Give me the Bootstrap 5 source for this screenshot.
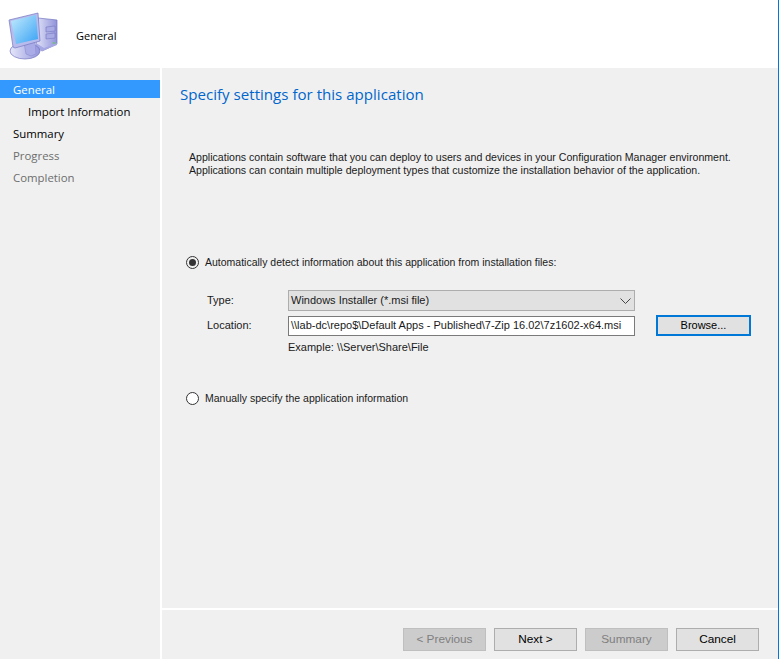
<!DOCTYPE html>
<html lang="en">
<head>
    <meta charset="UTF-8">
    <meta name="viewport" content="width=device-width, initial-scale=1.0">
    <title>General</title>
    <link href="https://cdn.jsdelivr.net/npm/bootstrap@5.3.0/dist/css/bootstrap.min.css" rel="stylesheet">
    <style>
        html, body {
            height: 100%;
            overflow: hidden;
        }
        body {
            background-color: #f0f0f0;
            font-family: "Liberation Sans", Arial, sans-serif;
            font-size: 11px;
            color: #1a1a1a;
        }
        .wizard {
            height: 659px;
            border-right: 1px solid #0078d7;
        }
        .wizard-head {
            height: 68px;
            background-color: #fff;
            font-family: "Open Sans", sans-serif;
            font-size: 11px;
            color: #000;
        }
        .wizard-head svg {
            width: 62px;
            height: 62px;
            flex: none;
        }
        .head-label {
            margin: 28px 0 0 14px;
        }
        .side-nav {
            width: 160px;
            padding-top: 12px;
            font-family: "Open Sans", sans-serif;
            font-size: 11.4px;
        }
        .side-item {
            height: 22px;
            line-height: 24px;
            padding-left: 13px;
            color: #000;
        }
        .side-item.current {
            height: 18px;
            line-height: 20px;
            margin-bottom: 2px;
            background-color: #3399ff;
            color: #fff;
        }
        .side-item.sub {
            padding-left: 28px;
        }
        .side-item.off {
            color: #6d6d6d;
        }
        .wizard-main {
            border-left: 2px solid #fff;
        }
        .wizard-body {
            padding: 15px 0 0 18px;
        }
        .wizard-title {
            font-family: "Open Sans", sans-serif;
            font-size: 15.1px;
            line-height: 22px;
            font-weight: 400;
            color: #0066cc;
            margin: 0 0 46px;
        }
        .intro {
            margin: 0 0 0 9px;
            font-size: 10.6px;
            line-height: 13px;
        }
        .radio-row {
            margin-left: 6px;
            font-size: 10.5px;
            line-height: 14px;
        }
        .radio-mark {
            width: 13px;
            height: 13px;
            border: 1px solid #333;
            border-radius: 50%;
            background-color: #fff;
            margin-right: 6px;
            flex: none;
        }
        .radio-mark.on {
            background-color: #f0f0f0;
        }
        .radio-mark.on::after {
            content: "";
            width: 7px;
            height: 7px;
            border-radius: 50%;
            background-color: #333;
        }
        .first-radio {
            margin-top: 78px;
        }
        .form-area {
            margin: 21px 0 0 27px;
        }
        .form-label-w {
            width: 81px;
        }
        .win-select {
            width: 347px;
            height: 21px;
            background-color: #e1e1e1;
            border: 1px solid #adadad;
            padding: 0 2px 0 2px;
        }
        .win-select svg {
            margin-right: 1px;
        }
        .win-input {
            width: 347px;
            height: 20px;
            background-color: #fff;
            border: 1px solid #7a7a7a;
            padding: 0 2px;
            white-space: nowrap;
            overflow: hidden;
        }
        .win-btn {
            width: 83px;
            height: 23px;
            padding: 0;
            font-size: 11.8px;
            line-height: 1;
            background-color: #e1e1e1;
            border: 1px solid #adadad;
            border-radius: 0;
            color: #000;
        }
        .win-btn:disabled {
            background-color: #cccccc;
            border-color: #bfbfbf;
            color: #7f7f7f;
            opacity: 1;
        }
        .browse-btn {
            width: 95px;
            height: 21px;
            margin-left: 21px;
            font-size: 11px;
            border: 2px solid #0078d7;
        }
        .example-line {
            margin: 5px 0 0 81px;
            line-height: 13px;
        }
        .second-radio {
            margin-top: 37px;
        }
        .wizard-foot {
            height: 51px;
            border-top: 2px solid #fff;
            padding: 18px 19px 0 0;
            gap: 8px;
        }
    </style>
</head>
<body>
    <div class="wizard d-flex flex-column">
        <div class="wizard-head d-flex align-items-start">
            <svg viewBox="0 0 62 62" aria-hidden="true">
                <defs>
                    <linearGradient id="screenFill" x1="0" y1="0" x2="1" y2="1">
                        <stop offset="0" stop-color="#c4ecfd"/>
                        <stop offset="1" stop-color="#38a2f4"/>
                    </linearGradient>
                    <linearGradient id="caseFill" x1="0" y1="0" x2="1" y2="0">
                        <stop offset="0" stop-color="#e2e3f8"/>
                        <stop offset="1" stop-color="#8f92da"/>
                    </linearGradient>
                    <linearGradient id="baseFill" x1="0" y1="0" x2="1" y2="0">
                        <stop offset="0" stop-color="#e6e7fa"/>
                        <stop offset="1" stop-color="#9496dc"/>
                    </linearGradient>
                </defs>
                <!-- case -->
                <path d="M38 18l19 2v24l-15 7-6-4z" fill="url(#caseFill)" stroke="#7477c0" stroke-width=".7"/>
                <path d="M46 27l9-1v5l-9 1zM46 34l9-1v5l-9 1z" fill="#a9ace4" stroke="#7477c0" stroke-width=".6"/>
                <path d="M36 43l8 5 13-5v2l-15 6-6-4z" fill="#a5a8e2"/>
                <circle cx="54" cy="43" r="1" fill="#66cc55"/>
                <!-- stand -->
                <ellipse cx="25" cy="51" rx="15" ry="8" fill="url(#baseFill)" stroke="#7477c0" stroke-width=".7"/>
                <path d="M24 43l11-2 1 13-5 2-5-2z" fill="#a9ace6" stroke="#8487cc" stroke-width=".5"/>
                <!-- monitor -->
                <path d="M9 20l29-7 2 28-25 7-2-1z" fill="#b9bbec" stroke="#7477c0" stroke-width=".7"/>
                <path d="M11 21l25-6 2 24-22 5z" fill="url(#screenFill)"/>
            </svg>
            <span class="head-label">General</span>
        </div>
        <div class="d-flex flex-grow-1" style="min-height:0">
            <nav class="side-nav flex-shrink-0">
                <div class="side-item current">General</div>
                <div class="side-item sub">Import Information</div>
                <div class="side-item">Summary</div>
                <div class="side-item off">Progress</div>
                <div class="side-item off">Completion</div>
            </nav>
            <div class="wizard-main flex-grow-1 d-flex flex-column">
                <div class="wizard-body flex-grow-1">
                    <h1 class="wizard-title">Specify settings for this application</h1>
                    <p class="intro">Applications contain software that you can deploy to users and devices in your Configuration Manager environment.<br>Applications can contain multiple deployment types that customize the installation behavior of the application.</p>

                    <div class="radio-row first-radio d-flex align-items-center">
                        <span class="radio-mark on d-flex align-items-center justify-content-center"></span>
                        <span>Automatically detect information about this application from installation files:</span>
                    </div>

                    <div class="form-area">
                        <div class="d-flex align-items-center mb-1">
                            <span class="form-label-w">Type:</span>
                            <div class="win-select d-flex align-items-center justify-content-between">
                                <span>Windows Installer (*.msi file)</span>
                                <svg width="11" height="6" viewBox="0 0 11 6" aria-hidden="true"><path d="M.5.5l5 5 5-5" fill="none" stroke="#444" stroke-width="1"/></svg>
                            </div>
                        </div>
                        <div class="d-flex align-items-center">
                            <span class="form-label-w">Location:</span>
                            <div class="win-input d-flex align-items-center">\\lab-dc\repo$\Default Apps - Published\7-Zip 16.02\7z1602-x64.msi</div>
                            <button type="button" class="btn win-btn browse-btn">Browse...</button>
                        </div>
                        <div class="example-line">Example: \\Server\Share\File</div>
                    </div>

                    <div class="radio-row second-radio d-flex align-items-center">
                        <span class="radio-mark"></span>
                        <span>Manually specify the application information</span>
                    </div>
                </div>
                <div class="wizard-foot d-flex justify-content-end align-items-start">
                    <button type="button" class="btn win-btn" disabled>&lt; Previous</button>
                    <button type="button" class="btn win-btn">Next &gt;</button>
                    <button type="button" class="btn win-btn" disabled>Summary</button>
                    <button type="button" class="btn win-btn">Cancel</button>
                </div>
            </div>
        </div>
    </div>
    <script src="https://cdn.jsdelivr.net/npm/bootstrap@5.3.0/dist/js/bootstrap.bundle.min.js"></script>
</body>
</html>
